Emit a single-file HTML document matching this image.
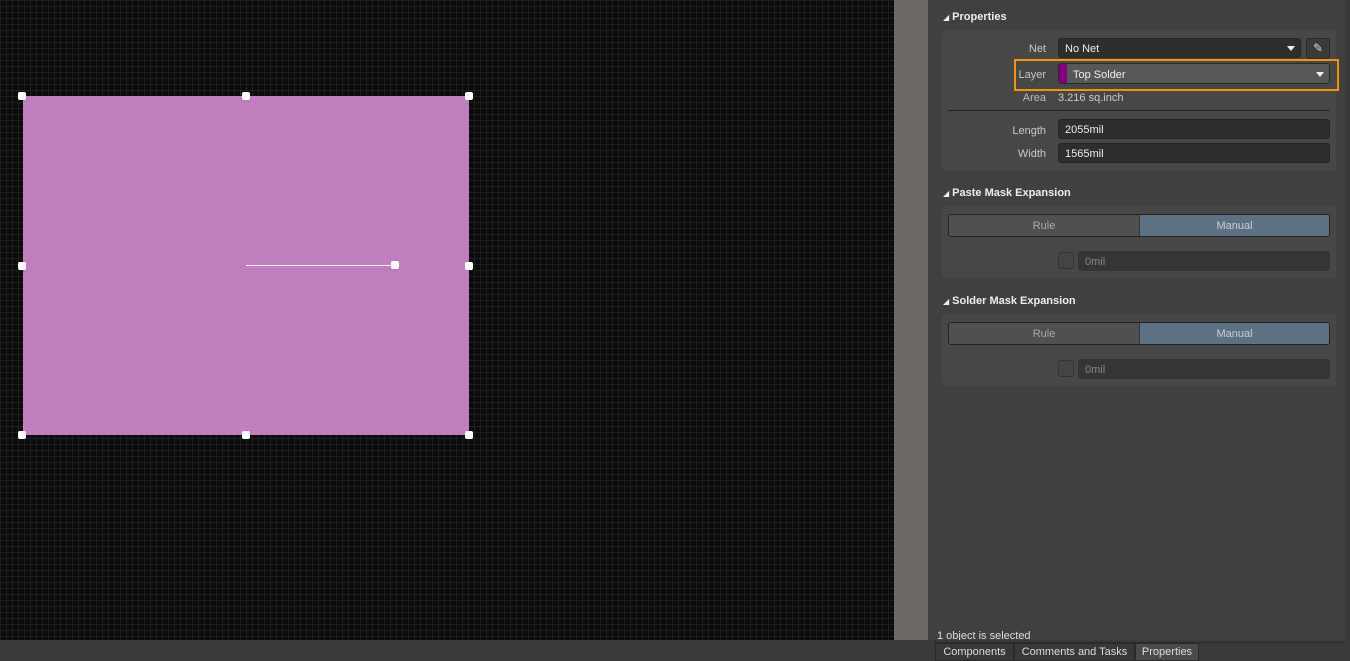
<!DOCTYPE html>
<html><head><style>
*{margin:0;padding:0;box-sizing:border-box}
body{width:1350px;height:661px;position:relative;overflow:hidden;background:#3b3b3b;font-family:"Liberation Sans","DejaVu Sans",sans-serif;font-size:11px;color:#ddd}
.a{position:absolute}
#cv{left:0;top:0;width:894px;height:640px;background-color:#0b0b0b;background-image:linear-gradient(to right,#1e1e1e 1px,transparent 1px),linear-gradient(to bottom,#1e1e1e 1px,transparent 1px);background-size:6px 6px}
.h{width:8px;height:8px;background:#fff;border-radius:2px;position:absolute}
.hd{font-weight:bold;color:#eee;font-size:11px}
.hd span{font-size:8px;margin-right:3px}
.box{background:#474747;border-radius:3px}
.lbl{color:#c8c8c8;text-align:right;width:60px}
.inp{background:#2e2e2e;border:1px solid #262626;border-radius:3px;height:20px;padding:4px 6px;color:#eee}
.tri{width:0;height:0;border-left:4px solid transparent;border-right:4px solid transparent;border-top:5px solid #eee}
</style></head><body>
<div id="cv" class="a"></div>
<div class="a" style="left:23px;top:96px;width:446px;height:339px;background:#bf7fbf"></div>
<div class="h" style="left:18px;top:92px"></div>
<div class="h" style="left:242px;top:92px"></div>
<div class="h" style="left:465px;top:92px"></div>
<div class="h" style="left:18px;top:262px"></div>
<div class="h" style="left:465px;top:262px"></div>
<div class="h" style="left:18px;top:431px"></div>
<div class="h" style="left:242px;top:431px"></div>
<div class="h" style="left:465px;top:431px"></div>
<div class="a" style="left:246px;top:265px;width:149px;height:1px;background:#fff"></div>
<div class="h" style="left:391px;top:261px"></div>
<div class="a" style="left:894px;top:0;width:34px;height:640px;background:#6b6866"></div>
<div class="a" style="left:928px;top:0;width:422px;height:641px;background:#404040"></div>
<div class="a" style="left:1345px;top:0;width:5px;height:641px;background:#3a3a3a"></div>

<div class="a hd" style="left:943px;top:11px"><span>◢</span>Properties</div>
<div class="a box" style="left:942px;top:30px;width:394px;height:141px"></div>
<div class="a lbl" style="left:986px;top:43px">Net</div>
<div class="a inp" style="left:1058px;top:38px;width:243px">No Net</div>
<div class="a tri" style="left:1287px;top:46px"></div>
<div class="a" style="left:1306px;top:38px;width:24px;height:21px;background:#3a3a3a;border:1px solid #2a2a2a;border-radius:3px;color:#ddd;text-align:center;line-height:19px;font-size:12px">✎</div>
<div class="a" style="left:1014px;top:59px;width:325px;height:32px;border:2px solid #f0940a"></div>
<div class="a lbl" style="left:986px;top:69px">Layer</div>
<div class="a" style="left:1058px;top:63px;width:272px;height:21px;background:#575757;border:1px solid #2a2a2a;border-radius:3px"></div>
<div class="a" style="left:1059px;top:64px;width:8px;height:19px;background:#800080"></div>
<div class="a" style="left:1073px;top:69px;color:#eee">Top Solder</div>
<div class="a tri" style="left:1316px;top:72px"></div>
<div class="a lbl" style="left:986px;top:92px;color:#bbb">Area</div>
<div class="a" style="left:1058px;top:92px;color:#ccc">3.216 sq.inch</div>
<div class="a" style="left:948px;top:110px;width:382px;height:1px;background:#222"></div>
<div class="a lbl" style="left:986px;top:125px">Length</div>
<div class="a inp" style="left:1058px;top:119px;width:272px">2055mil</div>
<div class="a lbl" style="left:986px;top:148px">Width</div>
<div class="a inp" style="left:1058px;top:143px;width:272px">1565mil</div>

<div class="a hd" style="left:943px;top:187px"><span>◢</span>Paste Mask Expansion</div>
<div class="a box" style="left:942px;top:206px;width:394px;height:72px"></div>
<div class="a" style="left:948px;top:214px;width:382px;height:23px;border:1px solid #222;border-radius:3px;overflow:hidden;display:flex;color:#aaa">
<div style="width:191px;background:#505050;text-align:center;line-height:22px;border-right:1px solid #333">Rule</div>
<div style="flex:1;background:#5d7185;text-align:center;line-height:22px;color:#ccc">Manual</div></div>
<div class="a" style="left:1058px;top:252px;width:16px;height:17px;border:1px solid #333;border-radius:3px;background:#444"></div>
<div class="a inp" style="left:1078px;top:251px;width:252px;color:#888;background:#353535;border-color:#353535">0mil</div>

<div class="a hd" style="left:943px;top:295px"><span>◢</span>Solder Mask Expansion</div>
<div class="a box" style="left:942px;top:314px;width:394px;height:72px"></div>
<div class="a" style="left:948px;top:322px;width:382px;height:23px;border:1px solid #222;border-radius:3px;overflow:hidden;display:flex;color:#aaa">
<div style="width:191px;background:#505050;text-align:center;line-height:22px;border-right:1px solid #333">Rule</div>
<div style="flex:1;background:#5d7185;text-align:center;line-height:22px;color:#ccc">Manual</div></div>
<div class="a" style="left:1058px;top:360px;width:16px;height:17px;border:1px solid #333;border-radius:3px;background:#444"></div>
<div class="a inp" style="left:1078px;top:359px;width:252px;color:#888;background:#353535;border-color:#353535">0mil</div>

<div class="a" style="left:937px;top:630px;color:#ddd">1 object is selected</div>
<div class="a" style="left:0;top:640px;width:1350px;height:21px;background:#3a3a3a"></div>
<div class="a" style="left:934px;top:642px;height:1px;background:#2a2a2a;width:410px"></div>
<div class="a" style="left:935px;top:643px;height:18px;display:flex;font-size:11px;color:#ddd">
<div style="width:79px;background:#383838;border:1px solid #2a2a2a;text-align:center;line-height:17px">Components</div>
<div style="width:121px;background:#383838;border:1px solid #2a2a2a;text-align:center;line-height:17px">Comments and Tasks</div>
<div style="width:64px;background:#4a4a4a;border:1px solid #2a2a2a;text-align:center;line-height:17px">Properties</div>
</div>
</body></html>
